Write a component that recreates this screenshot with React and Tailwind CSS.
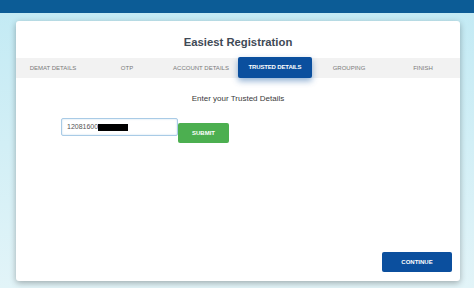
export default function App() {
  const tabs = ["DEMAT DETAILS", "OTP", "ACCOUNT DETAILS", "TRUSTED DETAILS", "GROUPING", "FINISH"];
  return (
    <div
      className="w-[474px] h-[288px] overflow-hidden flex flex-col bg-gradient-to-b from-[#c2eaf4] to-[#e2f4f8]"
      style={{ fontFamily: '"Liberation Sans", Arial, sans-serif' }}
    >
      <div className="h-[13px] shrink-0 bg-[#0c5c96]" />
      <div className="ml-[16px] w-[444px] mt-[8px] h-[260px] bg-white rounded-[3px] shadow-[0_2px_6px_rgba(0,0,0,0.3)] flex flex-col">
        <div className="pt-[14px] text-center text-[11.3px] leading-[14px] font-bold text-[#3f4a56]">
          Easiest Registration
        </div>
        <div className="mt-[9px] h-[20px] bg-[#f2f2f2] grid grid-cols-6">
          {tabs.map((t, i) =>
            i === 3 ? (
              <div
                key={t}
                className="-mt-px h-[21px] bg-[#0b4f9e] rounded-[2px] shadow-[0_3px_6px_rgba(11,79,158,0.45)] flex items-center justify-center text-[6px] font-bold text-white tracking-tight"
              >
                {t}
              </div>
            ) : (
              <div key={t} className="flex items-center justify-center text-[6px] text-[#7a7a7a]">
                {t}
              </div>
            )
          )}
        </div>
        <div className="mt-[16px] text-center text-[8px] leading-[10px] text-[#3a3a3a]">Enter your Trusted Details</div>
        <div className="mt-[14px] pl-[45px] flex items-start">
          <div className="w-[117px] h-[18px] border border-[#a9cbe6] rounded-[2px] flex items-center pl-[5px] text-[7px] text-[#555] shadow-[inset_0_0_2px_rgba(100,160,210,0.4)]">
            <span>12081600</span>
            <span className="w-[30px] h-[7px] bg-black" />
          </div>
          <div className="mt-[5px] w-[51px] h-[20px] bg-[#4caf50] rounded-[2px] flex items-center justify-center text-[6px] font-bold text-white">
            SUBMIT
          </div>
        </div>
        <div className="flex-1 flex justify-end items-end pr-[8px] pb-[9px]">
          <div className="w-[70px] h-[20px] bg-[#0b4f9e] rounded-[2px] flex items-center justify-center text-[6px] font-bold text-white">
            CONTINUE
          </div>
        </div>
      </div>
    </div>
  );
}
